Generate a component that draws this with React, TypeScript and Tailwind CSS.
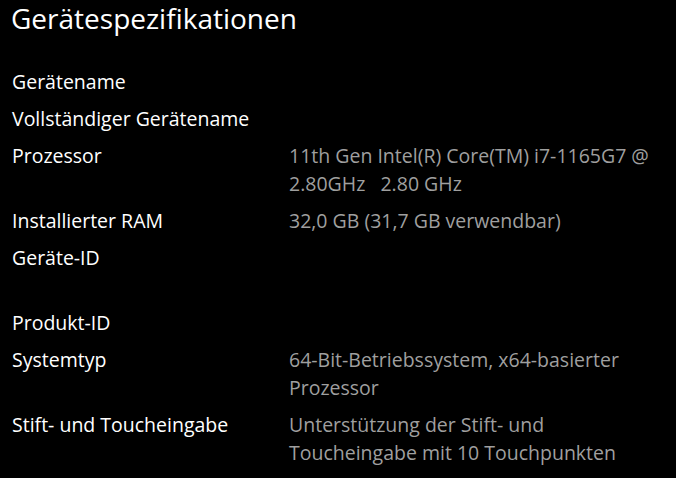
import React from "react";

type Row = { label: string; value: string[]; minLines?: number };

const rows: Row[] = [
  { label: "Gerätename", value: [] },
  { label: "Vollständiger Gerätename", value: [] },
  { label: "Prozessor", value: ["11th Gen Intel(R) Core(TM) i7-1165G7 @", "2.80GHz\u00a0\u00a0\u00a02.80 GHz"] },
  { label: "Installierter RAM", value: ["32,0 GB (31,7 GB verwendbar)"] },
  { label: "Geräte-ID", value: [], minLines: 2 },
  { label: "Produkt-ID", value: [] },
  { label: "Systemtyp", value: ["64-Bit-Betriebssystem, x64-basierter", "Prozessor"] },
  { label: "Stift- und Toucheingabe", value: ["Unterstützung der Stift- und", "Toucheingabe mit 10 Touchpunkten"] },
];

export default function App() {
  return (
    <div
      className="w-[676px] h-[478px] bg-black overflow-hidden px-3"
      style={{ fontFamily: '"Open Sans", "Noto Sans", sans-serif' }}
    >
      <div className="text-[28px] leading-[36px] text-white -ml-px">Gerätespezifikationen</div>
      <div className="mt-[32px] flex flex-col gap-[9px]">
        {rows.map((r) => (
          <div key={r.label} className="grid grid-cols-[277px_1fr] text-[19.5px] leading-[28px]">
            <div className="text-white">{r.label}</div>
            <div className={`text-[#9f9f9f] ${r.minLines === 2 ? "min-h-[56px]" : "min-h-[28px]"}`}>
              {r.value.map((l) => (
                <div key={l} className="whitespace-pre">{l}</div>
              ))}
            </div>
          </div>
        ))}
      </div>
    </div>
  );
}
